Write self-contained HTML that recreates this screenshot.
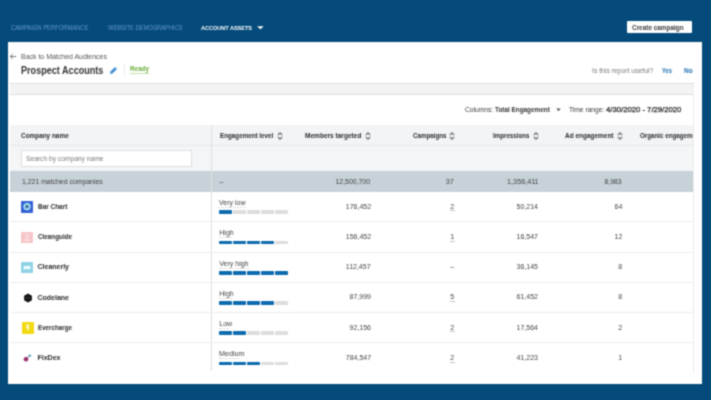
<!DOCTYPE html>
<html><head><meta charset="utf-8"><style>
html,body{margin:0;padding:0;}
body{width:711px;height:400px;overflow:hidden;background:#044a7a;position:relative;font-family:"Liberation Sans", sans-serif;}
.t{position:absolute;white-space:nowrap;}
.r{position:absolute;}
#w{position:absolute;left:0;top:0;width:711px;height:400px;background:#044a7a;filter:url(#bl);}
</style></head><body><svg width="0" height="0" style="position:absolute"><filter id="bl" x="0" y="0" width="100%" height="100%" color-interpolation-filters="sRGB"><feConvolveMatrix order="3" kernelMatrix="0.04387 0.12171 0.04387 0.12171 0.33767 0.12171 0.04387 0.12171 0.04387" edgeMode="duplicate" preserveAlpha="true"/></filter></svg><div id="w">
<div class="t" style="left:10.6px;top:24.92px;font-size:6.5px;line-height:6.5px;color:#6798cc;transform:scaleX(0.894);transform-origin:left center;">CAMPAIGN PERFORMANCE</div>
<div class="t" style="left:108px;top:24.92px;font-size:6.5px;line-height:6.5px;color:#6798cc;transform:scaleX(0.883);transform-origin:left center;">WEBSITE DEMOGRAPHICS</div>
<div class="t" style="left:201px;top:24.87px;font-size:6.2px;line-height:6.2px;color:#ffffff;font-weight:700;transform:scaleX(0.892);transform-origin:left center;">ACCOUNT ASSETS</div>
<svg class="r" style="left:256.6px;top:25.9px" width="7" height="4" viewBox="0 0 7 4"><path d="M0.1 0.3 L6.7 0.3 L3.4 3.3 Z" fill="#fff"/></svg>
<div class="r" style="left:626.5px;top:21.2px;width:65.0px;height:11.9px;background:#ffffff;border-radius:1px"></div>
<div class="t" style="left:632.4px;top:23.88px;font-size:7px;line-height:7px;color:#3a3a3a;font-weight:700;transform:scaleX(0.915);transform-origin:left center;">Create campaign</div>
<div class="r" style="left:8px;top:42px;width:694px;height:342px;background:#ffffff;"></div>
<svg class="r" style="left:9px;top:53px" width="8" height="7" viewBox="0 0 8 7"><path d="M7 3.5 H1.5 M3.8 1 L1.2 3.5 L3.8 6" stroke="#666" stroke-width="0.9" fill="none"/></svg>
<div class="t" style="left:21px;top:52.78px;font-size:7px;line-height:7px;color:#555;transform:scaleX(0.995);transform-origin:left center;">Back to Matched Audiences</div>
<div class="t" style="left:21.3px;top:65.71px;font-size:10px;line-height:10px;color:#333;font-weight:700;transform:scaleX(0.908);transform-origin:left center;">Prospect Accounts</div>
<svg class="r" style="left:109px;top:66px" width="9" height="9" viewBox="0 0 9 9"><path d="M1.1 7.9 L1.5 5.6 L6.0 1.1 L8.0 3.1 L3.4 7.5 Z" fill="#3a8ccf"/><path d="M5.2 1.9 L6.0 1.1 L8.0 3.1 L7.2 3.9 Z" fill="#7dbbe8"/></svg>
<div class="r" style="left:123.5px;top:64px;width:1.0px;height:12px;background:#ebebeb;"></div>
<div class="t" style="left:129.5px;top:65.08px;font-size:7px;line-height:7px;color:#6cb03e;font-weight:700;transform:scaleX(0.909);transform-origin:left center;">Ready</div>
<div class="r" style="left:129.5px;top:72.6px;width:19.0px;height:0.8px;background:#bfe0a8;"></div>
<div class="t" style="left:592px;top:67.18px;font-size:7px;line-height:7px;color:#7a7a7a;transform:scaleX(0.973);transform-origin:left center;">Is this report useful?</div>
<div class="t" style="left:661.6px;top:67.18px;font-size:7px;line-height:7px;color:#1f6fb2;font-weight:700;transform:scaleX(0.820);transform-origin:left center;">Yes</div>
<div class="t" style="left:684px;top:67.18px;font-size:7px;line-height:7px;color:#1f6fb2;font-weight:700;transform:scaleX(0.931);transform-origin:left center;">No</div>
<div class="r" style="left:9.5px;top:82.5px;width:683.5px;height:12.0px;background:#f3f3f3;border-top:1.2px solid #e0e0e0;border-bottom:1.2px solid #e0e0e0;box-sizing:border-box"></div>
<div class="r" style="left:693px;top:82px;width:1px;height:291px;background:#eeeeee;"></div>
<div class="t" style="left:464.8px;top:106.18px;font-size:7px;line-height:7px;color:#3a3a3a;transform:scaleX(0.953);transform-origin:left center;">Columns:</div>
<div class="t" style="left:494.7px;top:106.18px;font-size:7px;line-height:7px;color:#333;font-weight:700;transform:scaleX(0.911);transform-origin:left center;">Total Engagement</div>
<svg class="r" style="left:555.5px;top:108px" width="5" height="4" viewBox="0 0 5 4"><path d="M0.3 0.5 L4.7 0.5 L2.5 3.3 Z" fill="#555"/></svg>
<div class="t" style="left:569px;top:106.18px;font-size:7px;line-height:7px;color:#3a3a3a;transform:scaleX(0.952);transform-origin:left center;">Time range:</div>
<div class="t" style="left:605.6px;top:105.89px;font-size:7.6px;line-height:7.6px;color:#222;transform:scaleX(1.014);transform-origin:left center;-webkit-text-stroke:0.25px #222;">4/30/2020 - 7/29/2020</div>
<div class="r" style="left:9.5px;top:124.5px;width:683.5px;height:21.5px;background:#f3f4f6;border-bottom:1px solid #e6e8ea;box-sizing:border-box"></div>
<div class="r" style="left:9.5px;top:146px;width:683.5px;height:24.7px;background:#f4f5f6;"></div>
<div class="r" style="left:9.5px;top:170.7px;width:683.5px;height:20.9px;background:#c6d1d8;"></div>
<div class="r" style="left:211px;top:124.5px;width:1px;height:246.5px;background:#dcdee0;"></div>
<div class="t" style="left:21.3px;top:132.08px;font-size:7px;line-height:7px;color:#2a2a2a;font-weight:700;transform:scaleX(0.915);transform-origin:left center;">Company name</div>
<div class="t" style="left:220px;top:132.08px;font-size:7px;line-height:7px;color:#2a2a2a;font-weight:700;transform:scaleX(0.895);transform-origin:left center;">Engagement level</div>
<div class="t" style="left:305px;top:132.08px;font-size:7px;line-height:7px;color:#2a2a2a;font-weight:700;transform:scaleX(0.935);transform-origin:left center;">Members targeted</div>
<div class="t" style="left:412.5px;top:132.08px;font-size:7px;line-height:7px;color:#2a2a2a;font-weight:700;transform:scaleX(0.885);transform-origin:left center;">Campaigns</div>
<div class="t" style="left:493.2px;top:132.08px;font-size:7px;line-height:7px;color:#2a2a2a;font-weight:700;transform:scaleX(0.882);transform-origin:left center;">Impressions</div>
<div class="t" style="left:565.4px;top:132.08px;font-size:7px;line-height:7px;color:#2a2a2a;font-weight:700;transform:scaleX(0.924);transform-origin:left center;">Ad engagement</div>
<div class="t" style="left:640px;top:132.08px;font-size:7px;line-height:7px;color:#2a2a2a;font-weight:700;transform:scaleX(0.890);transform-origin:left center;">Organic engagement</div>
<div class="r" style="left:693px;top:124.5px;width:9px;height:21.5px;background:#ffffff;"></div>
<div class="r" style="left:693px;top:124.5px;width:1px;height:248.5px;background:#eaeaea;"></div>
<svg class="r" style="left:277.3px;top:131.8px" width="6" height="8" viewBox="0 0 6 8"><path d="M0.8 3.1 L3 0.8 L5.2 3.1 M0.8 4.9 L3 7.2 L5.2 4.9" stroke="#666" stroke-width="1.15" fill="none"/></svg>
<svg class="r" style="left:364.8px;top:131.8px" width="6" height="8" viewBox="0 0 6 8"><path d="M0.8 3.1 L3 0.8 L5.2 3.1 M0.8 4.9 L3 7.2 L5.2 4.9" stroke="#666" stroke-width="1.15" fill="none"/></svg>
<svg class="r" style="left:449.4px;top:131.8px" width="6" height="8" viewBox="0 0 6 8"><path d="M0.8 3.1 L3 0.8 L5.2 3.1 M0.8 4.9 L3 7.2 L5.2 4.9" stroke="#666" stroke-width="1.15" fill="none"/></svg>
<svg class="r" style="left:532.8px;top:131.8px" width="6" height="8" viewBox="0 0 6 8"><path d="M0.8 3.1 L3 0.8 L5.2 3.1 M0.8 4.9 L3 7.2 L5.2 4.9" stroke="#666" stroke-width="1.15" fill="none"/></svg>
<svg class="r" style="left:617.2px;top:131.8px" width="6" height="8" viewBox="0 0 6 8"><path d="M0.8 3.1 L3 0.8 L5.2 3.1 M0.8 4.9 L3 7.2 L5.2 4.9" stroke="#666" stroke-width="1.15" fill="none"/></svg>
<div class="r" style="left:21.3px;top:150.2px;width:170.9px;height:16.6px;background:#ffffff;border:1px solid #dedede;box-sizing:border-box"></div>
<div class="t" style="left:25.5px;top:155.08px;font-size:7px;line-height:7px;color:#7a7a7a;transform:scaleX(0.952);transform-origin:left center;">Search by company name</div>
<div class="t" style="left:21.8px;top:178.08px;font-size:7px;line-height:7px;color:#444;transform:scaleX(0.983);transform-origin:left center;">1,221 matched companies</div>
<div class="t" style="left:219.5px;top:178.08px;font-size:7px;line-height:7px;color:#444;">–</div>
<div class="t" style="left:335.35px;top:178.08px;font-size:7px;line-height:7px;color:#444;transform:scaleX(0.987);transform-origin:right center;">12,500,700</div>
<div class="t" style="left:445.70px;top:178.08px;font-size:7px;line-height:7px;color:#444;transform:scaleX(1.026);transform-origin:right center;">37</div>
<div class="t" style="left:507.88px;top:178.08px;font-size:7px;line-height:7px;color:#444;transform:scaleX(1.029);transform-origin:right center;">1,356,411</div>
<div class="t" style="left:604.27px;top:178.08px;font-size:7px;line-height:7px;color:#444;transform:scaleX(0.975);transform-origin:right center;">8,983</div>
<svg class="r" style="left:21.3px;top:201.0px" width="12" height="12" viewBox="0 0 12 12"><rect width="12" height="12" rx="0.8" fill="#3462d4"/><circle cx="6" cy="5.6" r="2.8" fill="#3f6f98" stroke="#aee8fb" stroke-width="1.7"/></svg>
<div class="t" style="left:37.5px;top:202.98px;font-size:7px;line-height:7px;color:#2a2a2a;font-weight:700;transform:scaleX(0.918);transform-origin:left center;">Bar Chart</div>
<div class="t" style="left:219.3px;top:199.08px;font-size:7px;line-height:7px;color:#444;transform:scaleX(1.005);transform-origin:left center;">Very low</div>
<div class="r" style="left:219.3px;top:207.00px;width:26.4px;height:0;border-top:0.6px dotted #cfcfcf"></div>
<div class="r" style="left:219.2px;top:210.4px;width:12.9px;height:3.8px;background:#0c6aae;border-radius:0.8px"></div>
<div class="r" style="left:233.1px;top:210.4px;width:12.9px;height:3.8px;background:#dddddd;border-radius:0.8px"></div>
<div class="r" style="left:247.0px;top:210.4px;width:12.9px;height:3.8px;background:#dddddd;border-radius:0.8px"></div>
<div class="r" style="left:260.9px;top:210.4px;width:12.9px;height:3.8px;background:#dddddd;border-radius:0.8px"></div>
<div class="r" style="left:274.8px;top:210.4px;width:12.9px;height:3.8px;background:#dddddd;border-radius:0.8px"></div>
<div class="t" style="left:343.88px;top:202.74px;font-size:7.5px;line-height:7.5px;color:#444;transform:scaleX(0.933);transform-origin:right center;">176,452</div>
<div class="t" style="left:450.23px;top:202.74px;font-size:7.5px;line-height:7.5px;color:#444;transform:scaleX(0.936);transform-origin:right center;">2</div>
<div class="r" style="left:449.8px;top:210.4px;width:5.0px;height:0.6px;background:#c4c4c4;"></div>
<div class="t" style="left:515.05px;top:202.74px;font-size:7.5px;line-height:7.5px;color:#444;transform:scaleX(0.933);transform-origin:right center;">50,214</div>
<div class="t" style="left:613.66px;top:202.74px;font-size:7.5px;line-height:7.5px;color:#444;transform:scaleX(0.934);transform-origin:right center;">64</div>
<div class="r" style="left:9.5px;top:221.25px;width:683.5px;height:1.0px;background:#ededed;"></div>
<svg class="r" style="left:21.3px;top:231.75px" width="12" height="11" viewBox="0 0 12 11"><rect width="12" height="11" rx="0.5" fill="#f6c6c8"/><circle cx="6" cy="3.6" r="1.4" fill="none" stroke="#fde9ea" stroke-width="0.9"/><path d="M3.6 8.6 L6 5.2 L8.4 8.6 Z" fill="none" stroke="#fde9ea" stroke-width="0.9"/></svg>
<div class="t" style="left:37.5px;top:233.23px;font-size:7px;line-height:7px;color:#2a2a2a;font-weight:700;transform:scaleX(0.904);transform-origin:left center;">Cleanguide</div>
<div class="t" style="left:219.3px;top:229.33px;font-size:7px;line-height:7px;color:#444;">High</div>
<div class="r" style="left:219.3px;top:237.25px;width:13.2px;height:0;border-top:0.6px dotted #cfcfcf"></div>
<div class="r" style="left:219.2px;top:240.65px;width:12.9px;height:3.8px;background:#0c6aae;border-radius:0.8px"></div>
<div class="r" style="left:233.1px;top:240.65px;width:12.9px;height:3.8px;background:#0c6aae;border-radius:0.8px"></div>
<div class="r" style="left:247.0px;top:240.65px;width:12.9px;height:3.8px;background:#0c6aae;border-radius:0.8px"></div>
<div class="r" style="left:260.9px;top:240.65px;width:12.9px;height:3.8px;background:#0c6aae;border-radius:0.8px"></div>
<div class="r" style="left:274.8px;top:240.65px;width:12.9px;height:3.8px;background:#dddddd;border-radius:0.8px"></div>
<div class="t" style="left:343.88px;top:232.99px;font-size:7.5px;line-height:7.5px;color:#444;transform:scaleX(0.933);transform-origin:right center;">156,452</div>
<div class="t" style="left:450.23px;top:232.99px;font-size:7.5px;line-height:7.5px;color:#444;transform:scaleX(0.936);transform-origin:right center;">1</div>
<div class="r" style="left:449.8px;top:240.65px;width:5.0px;height:0.6px;background:#c4c4c4;"></div>
<div class="t" style="left:515.05px;top:232.99px;font-size:7.5px;line-height:7.5px;color:#444;transform:scaleX(0.933);transform-origin:right center;">16,547</div>
<div class="t" style="left:613.66px;top:232.99px;font-size:7.5px;line-height:7.5px;color:#444;transform:scaleX(0.934);transform-origin:right center;">12</div>
<div class="r" style="left:9.5px;top:251.5px;width:683.5px;height:1.0px;background:#ededed;"></div>
<svg class="r" style="left:21.2px;top:262.0px" width="12" height="11" viewBox="0 0 12 11"><rect width="12" height="11" rx="0.5" fill="#8fd3e5"/><circle cx="4.3" cy="5.6" r="1.9" fill="#f4fdff"/><circle cx="7.7" cy="5.6" r="1.9" fill="#f4fdff"/></svg>
<div class="t" style="left:37.5px;top:263.48px;font-size:7px;line-height:7px;color:#2a2a2a;font-weight:700;">Cleanerly</div>
<div class="t" style="left:219.3px;top:259.58px;font-size:7px;line-height:7px;color:#444;">Very high</div>
<div class="r" style="left:219.3px;top:267.50px;width:29.7px;height:0;border-top:0.6px dotted #cfcfcf"></div>
<div class="r" style="left:219.2px;top:270.9px;width:12.9px;height:3.8px;background:#0c6aae;border-radius:0.8px"></div>
<div class="r" style="left:233.1px;top:270.9px;width:12.9px;height:3.8px;background:#0c6aae;border-radius:0.8px"></div>
<div class="r" style="left:247.0px;top:270.9px;width:12.9px;height:3.8px;background:#0c6aae;border-radius:0.8px"></div>
<div class="r" style="left:260.9px;top:270.9px;width:12.9px;height:3.8px;background:#0c6aae;border-radius:0.8px"></div>
<div class="r" style="left:274.8px;top:270.9px;width:12.9px;height:3.8px;background:#0c6aae;border-radius:0.8px"></div>
<div class="t" style="left:344.44px;top:263.24px;font-size:7.5px;line-height:7.5px;color:#444;transform:scaleX(0.934);transform-origin:right center;">112,457</div>
<div class="t" style="left:450.23px;top:263.24px;font-size:7.5px;line-height:7.5px;color:#444;transform:scaleX(0.936);transform-origin:right center;">–</div>
<div class="t" style="left:515.05px;top:263.24px;font-size:7.5px;line-height:7.5px;color:#444;transform:scaleX(0.933);transform-origin:right center;">36,145</div>
<div class="t" style="left:617.83px;top:263.24px;font-size:7.5px;line-height:7.5px;color:#444;transform:scaleX(0.936);transform-origin:right center;">8</div>
<div class="r" style="left:9.5px;top:281.75px;width:683.5px;height:1.0px;background:#ededed;"></div>
<svg class="r" style="left:21.5px;top:291.75px" width="12" height="12" viewBox="0 0 12 12"><path d="M6 1.6 L9.9 3.8 L9.9 8.2 L6 10.4 L2.1 8.2 L2.1 3.8 Z" fill="#111"/><path d="M4.3 6 L5.3 5 M4.3 6 L5.3 7 M7.7 6 L6.7 5 M7.7 6 L6.7 7" stroke="#888" stroke-width="0.5"/></svg>
<div class="t" style="left:37.5px;top:293.73px;font-size:7px;line-height:7px;color:#2a2a2a;font-weight:700;">Codelane</div>
<div class="t" style="left:219.3px;top:289.83px;font-size:7px;line-height:7px;color:#444;">High</div>
<div class="r" style="left:219.3px;top:297.75px;width:13.2px;height:0;border-top:0.6px dotted #cfcfcf"></div>
<div class="r" style="left:219.2px;top:301.15px;width:12.9px;height:3.8px;background:#0c6aae;border-radius:0.8px"></div>
<div class="r" style="left:233.1px;top:301.15px;width:12.9px;height:3.8px;background:#0c6aae;border-radius:0.8px"></div>
<div class="r" style="left:247.0px;top:301.15px;width:12.9px;height:3.8px;background:#0c6aae;border-radius:0.8px"></div>
<div class="r" style="left:260.9px;top:301.15px;width:12.9px;height:3.8px;background:#0c6aae;border-radius:0.8px"></div>
<div class="r" style="left:274.8px;top:301.15px;width:12.9px;height:3.8px;background:#dddddd;border-radius:0.8px"></div>
<div class="t" style="left:348.05px;top:293.49px;font-size:7.5px;line-height:7.5px;color:#444;transform:scaleX(0.933);transform-origin:right center;">87,999</div>
<div class="t" style="left:450.23px;top:293.49px;font-size:7.5px;line-height:7.5px;color:#444;transform:scaleX(0.936);transform-origin:right center;">5</div>
<div class="r" style="left:449.8px;top:301.15px;width:5.0px;height:0.6px;background:#c4c4c4;"></div>
<div class="t" style="left:515.05px;top:293.49px;font-size:7.5px;line-height:7.5px;color:#444;transform:scaleX(0.933);transform-origin:right center;">61,452</div>
<div class="t" style="left:617.83px;top:293.49px;font-size:7.5px;line-height:7.5px;color:#444;transform:scaleX(0.936);transform-origin:right center;">8</div>
<div class="r" style="left:9.5px;top:312.0px;width:683.5px;height:1.0px;background:#ededed;"></div>
<svg class="r" style="left:21.5px;top:322.0px" width="12" height="12" viewBox="0 0 12 12"><rect width="12" height="12" rx="0.8" fill="#f1da12"/><path d="M4.6 2.6 L7.6 2.6 L6.2 5.6 L7.8 5.6 L5 9.6 L5.6 6.6 L4.2 6.6 Z" fill="#fffbe0"/></svg>
<div class="t" style="left:37.5px;top:323.98px;font-size:7px;line-height:7px;color:#2a2a2a;font-weight:700;transform:scaleX(0.889);transform-origin:left center;">Evercharge</div>
<div class="t" style="left:219.3px;top:320.08px;font-size:7px;line-height:7px;color:#444;">Low</div>
<div class="r" style="left:219.3px;top:328.00px;width:9.9px;height:0;border-top:0.6px dotted #cfcfcf"></div>
<div class="r" style="left:219.2px;top:331.4px;width:12.9px;height:3.8px;background:#0c6aae;border-radius:0.8px"></div>
<div class="r" style="left:233.1px;top:331.4px;width:12.9px;height:3.8px;background:#0c6aae;border-radius:0.8px"></div>
<div class="r" style="left:247.0px;top:331.4px;width:12.9px;height:3.8px;background:#dddddd;border-radius:0.8px"></div>
<div class="r" style="left:260.9px;top:331.4px;width:12.9px;height:3.8px;background:#dddddd;border-radius:0.8px"></div>
<div class="r" style="left:274.8px;top:331.4px;width:12.9px;height:3.8px;background:#dddddd;border-radius:0.8px"></div>
<div class="t" style="left:348.05px;top:323.74px;font-size:7.5px;line-height:7.5px;color:#444;transform:scaleX(0.933);transform-origin:right center;">92,156</div>
<div class="t" style="left:450.23px;top:323.74px;font-size:7.5px;line-height:7.5px;color:#444;transform:scaleX(0.936);transform-origin:right center;">2</div>
<div class="r" style="left:449.8px;top:331.4px;width:5.0px;height:0.6px;background:#c4c4c4;"></div>
<div class="t" style="left:515.05px;top:323.74px;font-size:7.5px;line-height:7.5px;color:#444;transform:scaleX(0.933);transform-origin:right center;">17,564</div>
<div class="t" style="left:617.83px;top:323.74px;font-size:7.5px;line-height:7.5px;color:#444;transform:scaleX(0.936);transform-origin:right center;">2</div>
<div class="r" style="left:9.5px;top:342.25px;width:683.5px;height:1.0px;background:#ededed;"></div>
<svg class="r" style="left:21.5px;top:352.25px" width="12" height="12" viewBox="0 0 12 12"><line x1="4" y1="7" x2="7.5" y2="3.7" stroke="#7a4a7a" stroke-width="0.8"/><circle cx="4" cy="7.2" r="2.3" fill="#9a2f6b"/><circle cx="7.8" cy="3.7" r="1.3" fill="#5ba7b8"/></svg>
<div class="t" style="left:37.5px;top:354.23px;font-size:7px;line-height:7px;color:#2a2a2a;font-weight:700;">FixDex</div>
<div class="t" style="left:219.3px;top:350.33px;font-size:7px;line-height:7px;color:#444;transform:scaleX(1.028);transform-origin:left center;">Medium</div>
<div class="r" style="left:219.3px;top:358.25px;width:19.8px;height:0;border-top:0.6px dotted #cfcfcf"></div>
<div class="r" style="left:219.2px;top:361.65px;width:12.9px;height:3.8px;background:#0c6aae;border-radius:0.8px"></div>
<div class="r" style="left:233.1px;top:361.65px;width:12.9px;height:3.8px;background:#0c6aae;border-radius:0.8px"></div>
<div class="r" style="left:247.0px;top:361.65px;width:12.9px;height:3.8px;background:#0c6aae;border-radius:0.8px"></div>
<div class="r" style="left:260.9px;top:361.65px;width:12.9px;height:3.8px;background:#dddddd;border-radius:0.8px"></div>
<div class="r" style="left:274.8px;top:361.65px;width:12.9px;height:3.8px;background:#dddddd;border-radius:0.8px"></div>
<div class="t" style="left:343.88px;top:353.99px;font-size:7.5px;line-height:7.5px;color:#444;transform:scaleX(0.933);transform-origin:right center;">784,547</div>
<div class="t" style="left:450.23px;top:353.99px;font-size:7.5px;line-height:7.5px;color:#444;transform:scaleX(0.936);transform-origin:right center;">2</div>
<div class="r" style="left:449.8px;top:361.65px;width:5.0px;height:0.6px;background:#c4c4c4;"></div>
<div class="t" style="left:515.05px;top:353.99px;font-size:7.5px;line-height:7.5px;color:#444;transform:scaleX(0.933);transform-origin:right center;">41,223</div>
<div class="t" style="left:617.83px;top:353.99px;font-size:7.5px;line-height:7.5px;color:#444;transform:scaleX(0.936);transform-origin:right center;">1</div>
</div></body></html>
